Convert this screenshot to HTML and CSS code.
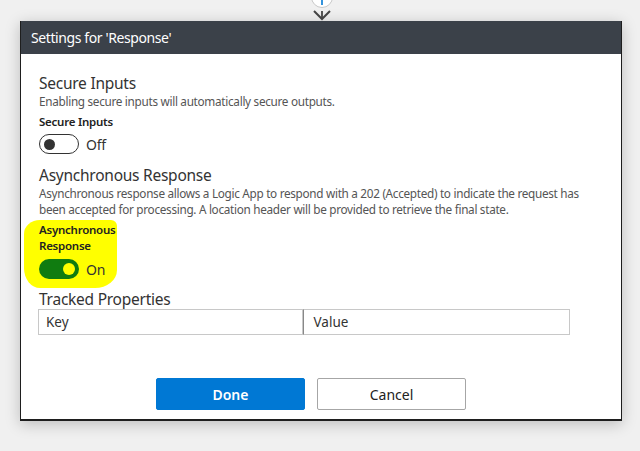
FILE: index.html
```html
<!DOCTYPE html>
<html>
<head>
<meta charset="utf-8">
<link rel="stylesheet" href="styles.css">
</head>
<body>
<div class="stage">
  <div class="connector">
    <svg width="40" height="21" viewBox="0 0 40 21">
      <circle cx="21" cy="-3" r="10.5" fill="#fff" stroke="#c8c8c8" stroke-width="1"/>
      <line x1="21" y1="-4" x2="21" y2="5" stroke="#0078d4" stroke-width="1.6"/>
      <line x1="21" y1="11" x2="21" y2="19" stroke="#444" stroke-width="1.8"/>
      <polyline points="13,11 21,19 29,11" fill="none" stroke="#444" stroke-width="2"/>
    </svg>
  </div>
  <div class="dialog">
    <div class="dialog-header">Settings for 'Response'</div>
    <div class="dialog-body">
      <section class="setting">
        <h2 class="setting-title">Secure Inputs</h2>
        <p class="setting-desc">Enabling secure inputs will automatically secure outputs.</p>
        <div class="field">
          <div class="field-label">Secure Inputs</div>
          <div class="toggle-row">
            <span class="toggle off"><span class="knob"></span></span>
            <span class="toggle-text">Off</span>
          </div>
        </div>
      </section>
      <section class="setting">
        <h2 class="setting-title">Asynchronous Response</h2>
        <p class="setting-desc">Asynchronous response allows a Logic App to respond with a 202 (Accepted) to indicate the request has been accepted for processing. A location header will be provided to retrieve the final state.</p>
        <div class="field highlight">
          <div class="field-label">Asynchronous Response</div>
          <div class="toggle-row">
            <span class="toggle on"><span class="knob"></span></span>
            <span class="toggle-text">On</span>
          </div>
        </div>
      </section>
      <section class="setting tracked">
        <h2 class="setting-title">Tracked Properties</h2>
        <div class="kv">
          <div class="kv-cell">Key</div>
          <div class="kv-cell">Value</div>
        </div>
      </section>
      <div class="actions">
        <button class="btn primary">Done</button>
        <button class="btn secondary">Cancel</button>
      </div>
    </div>
  </div>
</div>
</body>
</html>
```
FILE: styles.css
```css
html, body {
  margin: 0;
  padding: 0;
}
body {
  background: #f0f0f0;
  font-family: "Noto Sans", "Open Sans", sans-serif;
  color: #333;
  width: 640px;
  height: 451px;
  overflow: hidden;
}
.stage {
  padding-left: 20px;
}
.connector {
  width: 602px;
  height: 21px;
  display: flex;
  justify-content: center;
}
.connector svg {
  display: block;
  overflow: visible;
}
.dialog {
  width: 600px;
  height: 398px;
  background: #fff;
  border: 1px solid #1e1e1e;
  border-top: none;
  border-bottom: 2px solid #1e1e1e;
  box-shadow: 0 3px 14px rgba(0, 0, 0, 0.22);
  display: flex;
  flex-direction: column;
}
.dialog-header {
  height: 33px;
  background: #3b4149;
  color: #fff;
  font-size: 14px;
  line-height: 34px;
  padding-left: 10px;
  letter-spacing: -0.4px;
  flex: none;
}
.dialog-body {
  padding: 19px 18px 0 18px;
  display: flex;
  flex-direction: column;
}
.setting-title {
  margin: 0;
  font-size: 15.5px;
  font-weight: 400;
  line-height: 20px;
  color: #333;
  letter-spacing: -0.25px;
}
.setting-desc {
  margin: 0;
  max-width: 552px;
  font-size: 11.75px;
  line-height: 16px;
  color: #555;
  letter-spacing: -0.3px;
}
.field-label {
  font-size: 11.5px;
  font-weight: 600;
  line-height: 16px;
  color: #222;
  letter-spacing: -0.25px;
  margin-top: 5px;
}
.toggle-row {
  display: flex;
  align-items: center;
  gap: 7px;
  height: 22px;
  margin-top: 3px;
}
.toggle {
  box-sizing: border-box;
  width: 40px;
  height: 20px;
  border-radius: 10px;
  display: flex;
  align-items: center;
  padding: 0 4px;
}
.toggle .knob {
  width: 11px;
  height: 11px;
  border-radius: 50%;
}
.toggle.off {
  border: 1px solid #333;
  background: #fff;
}
.toggle.off .knob {
  background: #333;
}
.toggle.on {
  background: #107c10;
  justify-content: flex-end;
}
.toggle.on .knob {
  background: #ffff00;
  width: 12px;
  height: 12px;
}
.toggle-text {
  font-size: 14px;
  color: #333;
  letter-spacing: -0.2px;
}
.setting + .setting {
  margin-top: 10px;
}
.highlight {
  box-sizing: border-box;
  background: #ffff00;
  width: 93px;
  margin-left: -15px;
  margin-top: 3px;
  padding: 2px 2px 8px 15px;
  border-radius: 16px 6px 22px 16px / 14px 6px 18px 20px;
}
.highlight .field-label {
  margin-top: 0;
}
.highlight .toggle-row {
  margin-top: 4px;
}
.setting.tracked {
  margin-top: 1px;
}
.kv {
  display: flex;
  width: 532px;
  margin-left: -1px;
}
.kv-cell {
  box-sizing: border-box;
  flex: 1;
  height: 26px;
  border: 1px solid #c8c8c8;
  font-size: 13.5px;
  line-height: 24px;
  padding-left: 7px;
  color: #333;
}
.kv-cell + .kv-cell {
  border-left: 1px solid #888;
  padding-left: 10px;
}
.actions {
  display: flex;
  justify-content: center;
  gap: 12px;
  margin-top: 43px;
  padding-right: 20px;
}
.btn {
  width: 149px;
  height: 32px;
  font-family: inherit;
  font-size: 14px;
  border-radius: 2px;
  cursor: pointer;
}
.btn.primary {
  background: #0078d4;
  border: 1px solid #0078d4;
  color: #fff;
  font-weight: 600;
}
.btn.secondary {
  background: #fff;
  border: 1px solid #a6a6a6;
  color: #222;
}
```
